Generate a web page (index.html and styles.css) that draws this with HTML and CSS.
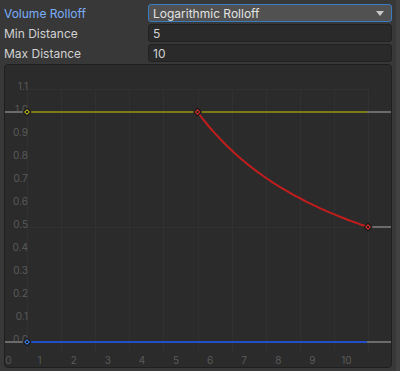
FILE: index.html
```html
<!DOCTYPE html>
<html lang="en">

<head>
    <meta charset="UTF-8">
    <title>Audio Rolloff</title>
    <link rel="stylesheet" href="styles.css">
</head>

<body>
    <div class="page">
        <div class="inspector">
            <div class="row">
                <span class="label focus">Volume Rolloff</span>
                <div class="dropdown">
                    <span>Logarithmic Rolloff</span>
                    <span class="arrow"></span>
                </div>
            </div>
            <div class="row">
                <span class="label">Min Distance</span>
                <div class="field">5</div>
            </div>
            <div class="row">
                <span class="label">Max Distance</span>
                <div class="field">10</div>
            </div>
            <div class="curve">
                <svg id="graph" width="386" height="302" viewBox="5 65 386 302"></svg>
            </div>
        </div>
        <div class="scroll">
            <div class="scroll_bar"></div>
        </div>
    </div>
    <script>
        // 坐标换算
        let x0 = 27, ux = 34.1;
        let y0 = 342, uy = 230;
        let px = d => x0 + d * ux;
        let py = v => y0 - v * uy;
        let svg = document.querySelector("#graph");
        let str = "";

        // 网格
        for (let k = 0; k <= 10; k++) {
            let x = Math.round(px(k)) + 0.5;
            str += `<line class="grid" x1="${x}" y1="89" x2="${x}" y2="352"/>`;
        }
        [1.1, 0.5].forEach(v => {
            let y = Math.round(py(v)) + 0.5;
            str += `<line class="grid" x1="27" y1="${y}" x2="368" y2="${y}"/>`;
        });

        // 刻度文字
        for (let k = 0; k <= 10; k++) {
            let x = k === 0 ? 8.5 : px(k) - 21.5;
            str += `<text class="tick" x="${x}" y="364" text-anchor="middle">${k}</text>`;
        }
        for (let i = 0; i <= 11; i++) {
            let v = i / 10;
            str += `<text class="tick" x="28" y="${py(v) + 0.5}" text-anchor="end">${v.toFixed(1)}</text>`;
        }

        // 曲线两端的灰线
        [[112, 4, 27], [342, 4, 27], [112, 367, 391], [227, 368, 391], [342, 367, 391]].forEach(l => {
            str += `<line class="wrap" x1="${l[1]}" y1="${l[0]}" x2="${l[2]}" y2="${l[0]}"/>`;
        });
        str += `<line class="spread" x1="27" y1="112" x2="367" y2="112"/>`;
        str += `<line class="spatial" x1="27" y1="342" x2="367" y2="342"/>`;

        // 对数衰减
        let pts = [];
        for (let d = 5; d <= 10.001; d += 0.1) {
            pts.push(px(d).toFixed(1) + "," + py(5 / d).toFixed(1));
        }
        str += `<polyline class="volume" points="${pts.join(" ")}"/>`;

        // 关键帧
        let key = (x, y, color) => `<g transform="translate(${x} ${y})">
                <polygon points="0,-4.5 4.5,0 0,4.5 -4.5,0" fill="#151515"/>
                <polygon points="0,-3 3,0 0,3 -3,0" fill="${color}"/>
                <rect x="-1" y="-1" width="2" height="2" fill="#1b1b1b"/>
            </g>`;
        str += key(27, 112, "#a8a520");
        str += key(197.5, 112, "#d8302a");
        str += key(368, 227, "#d8302a");
        str += key(27, 342, "#3a7ae0");

        svg.innerHTML = str;
    </script>
</body>

</html>
```

FILE: styles.css
```css
* {
    margin: 0;
    padding: 0;
    box-sizing: border-box;
}

body {
    background: #383838;
    font-family: Inter, "Liberation Sans", sans-serif;
    font-size: 12px;
    color: #d2d2d2;
}

.page {
    width: 400px;
    height: 371px;
    display: flex;
    overflow: hidden;
}

.inspector {
    width: 392px;
    padding: 4px 0 0 4px;
    display: flex;
    flex-direction: column;
    gap: 2px;
}

.row {
    height: 18px;
    display: flex;
    align-items: center;
}

.label {
    width: 144px;
    line-height: 18px;
    padding-top: 1px;
}

.label.focus {
    color: #7baefa;
}

.dropdown,
.field {
    flex: 1;
    height: 18px;
    border-radius: 3px;
    padding: 1px 4px 0;
    line-height: 16px;
}

.dropdown {
    background: #515151;
    border: 1px solid #3b7dc4;
    color: #e2e2e2;
    display: flex;
    justify-content: space-between;
    align-items: center;
}

.dropdown .arrow {
    width: 0;
    height: 0;
    border-left: 4px solid transparent;
    border-right: 4px solid transparent;
    border-top: 5px solid #c8c8c8;
    margin-right: 3px;
}

.field {
    background: #2a2a2a;
    border: 1px solid #212121;
}

.curve {
    height: 304px;
    background: #2b2b2b;
    border: 1px solid #1f1f1f;
    border-radius: 4px;
    overflow: hidden;
}

.curve svg {
    display: block;
}

.grid {
    stroke: #313131;
    stroke-width: 1;
}

.tick {
    font-family: Inter, "Liberation Sans", sans-serif;
    font-size: 10px;
    fill: #5a5a5a;
}

.wrap {
    stroke: #6b6b6b;
    stroke-width: 2;
}

.spread {
    stroke: #7d7b18;
    stroke-width: 2;
}

.spatial {
    stroke: #2150c8;
    stroke-width: 2;
}

.volume {
    fill: none;
    stroke: #c21d1d;
    stroke-width: 2;
}

.scroll {
    flex: 1;
    display: flex;
    justify-content: flex-end;
}

.scroll_bar {
    width: 4px;
    background: #414141;
}
```
